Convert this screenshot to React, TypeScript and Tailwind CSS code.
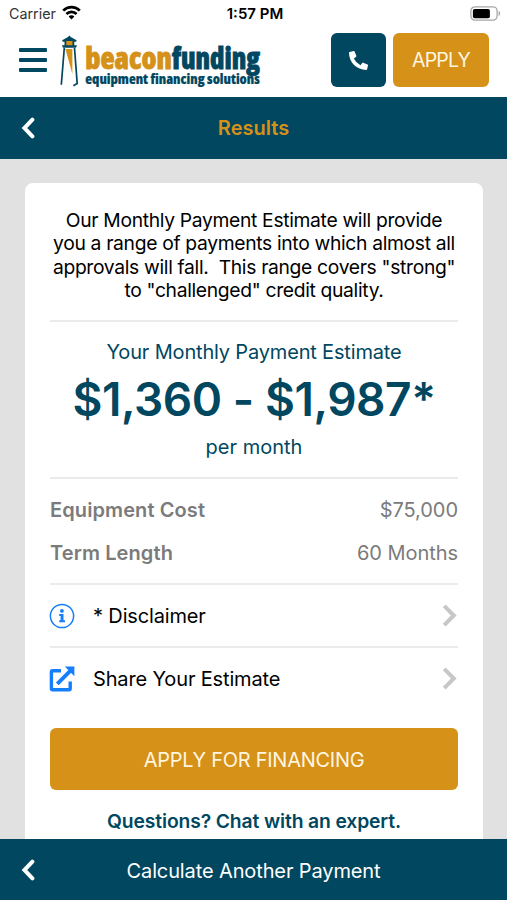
import type { ReactNode } from 'react'
import { FaPhoneAlt } from 'react-icons/fa'

function WifiIcon() {
  return (
    <svg className="ml-[6px] mt-[-2px] h-[15px] w-[19px]" viewBox="0 0 19 15" fill="none" stroke="#000" strokeWidth="2.7">
      <path d="M1.2 5.6C5.8 1 13.2 1 17.8 5.6" />
      <path d="M4.4 9C7.2 6.1 11.8 6.1 14.6 9" />
      <path d="M9.5 14.4 6.6 11.4C8.2 9.9 10.8 9.9 12.4 11.4Z" fill="#000" stroke="none" />
    </svg>
  )
}

function BatteryIcon() {
  return (
    <svg className="mt-[-1px] h-[15px] w-[31px]" viewBox="0 0 31 15">
      <rect x="0.9" y="0.9" width="26.2" height="13.2" rx="4" fill="none" stroke="#a6a6a6" strokeWidth="1.3" />
      <rect x="2.9" y="2.9" width="17" height="9.3" rx="1.8" fill="#000" />
      <path d="M28.6 5V10C30.6 9.4 30.6 5.6 28.6 5Z" fill="#a6a6a6" />
    </svg>
  )
}

function Logo() {
  return (
    <svg className="ml-[11px] h-[58px] w-[210px]" viewBox="58 33 210 58" role="img" aria-label="Beacon Funding">
      {/* Lighthouse */}
      <path d="M69.4 35.4 70.8 37 76.6 40.2 76.2 41.8H62.6L62.2 40.2 68 37Z" fill="#00475f" />
      <path d="M65 41H74V46H65Z" fill="#d59118" />
      <path d="M65.4 41V46M73.4 41V46" stroke="#00475f" strokeWidth="1.8" fill="none" />
      <path d="M61.8 45.2H77L76 47.8H63Z" fill="#00475f" />
      <path d="M65.4 49H72.4V74Z" fill="#d59118" />
      <path d="M64.3 48 61.3 84.8M74.5 48 77.2 83.6 73.4 85.8" stroke="#00475f" strokeWidth="1.7" fill="none" />
      <g className="font-['Open_Sans','Liberation_Sans',sans-serif] [font-stretch:75%]">
        <text x="85.3" y="68.6" fontSize="29.5" fontWeight="800" fill="#d59118" stroke="#d59118" strokeWidth="0.8" textLength="86.7" lengthAdjust="spacingAndGlyphs">
          beacon
        </text>
        <text x="172" y="68.6" fontSize="29.5" fontWeight="800" fill="#00475f" stroke="#00475f" strokeWidth="0.8" textLength="88" lengthAdjust="spacingAndGlyphs">
          funding
        </text>
        <text x="85.3" y="83.8" fontSize="14.2" fontWeight="800" fill="#00475f" stroke="#00475f" strokeWidth="0.2" textLength="174.5" lengthAdjust="spacingAndGlyphs">
          equipment financing solutions
        </text>
      </g>
    </svg>
  )
}

function InfoIcon() {
  return (
    <svg className="size-[26px]" viewBox="0 0 26 26">
      <circle cx="13" cy="13" r="11.6" fill="none" stroke="#147efb" strokeWidth="1.5" />
      <circle cx="12.9" cy="7.9" r="1.9" fill="#147efb" />
      <path d="M10.2 11H14.5V17.3H16V19.3H10.2V17.3H11.6V13H10.2Z" fill="#147efb" />
    </svg>
  )
}

function ShareIcon() {
  return (
    <svg className="size-[26px]" viewBox="0 0 26 26" fill="none" stroke="#147efb">
      <path d="M12 4.7H3.6A1.2 1.2 0 0 0 2.4 5.9V22.6A1.2 1.2 0 0 0 3.6 23.8H20A1.2 1.2 0 0 0 21.2 22.6V15.5" strokeWidth="3.4" />
      <path d="M8.3 17.8 22 4.1" strokeWidth="3.8" />
      <path d="M15.8 0.6H25.4V10.2Z" fill="#147efb" stroke="none" />
    </svg>
  )
}

function BackChevron() {
  return (
    <svg className="h-[22px] w-[18px]" viewBox="0 0 18 22" fill="none" stroke="#fff" strokeWidth="4">
      <path d="M13.4 2.6 5.4 11 13.4 19.4" strokeLinecap="round" />
    </svg>
  )
}

function RowChevron() {
  return (
    <svg className="mr-px h-[23px] w-[15px]" viewBox="0 0 15 23" fill="none" stroke="#c7c7c7" strokeWidth="4">
      <path d="M2.2 1.9 11.8 11.5 2.2 21.1" />
    </svg>
  )
}

function LinkRow({ icon, children }: { icon: ReactNode; children: ReactNode }) {
  return (
    <button className="flex h-[63px] w-full items-center border-t-2 border-[#ebebeb] text-left text-black">
      <span className="-ml-px w-[44px]">{icon}</span>
      <span className="flex-1 text-[20px] tracking-[-0.15px]">{children}</span>
      <RowChevron />
    </button>
  )
}

function DetailRow({ label, value }: { label: string; value: string }) {
  return (
    <div className="flex h-[43px] items-center justify-between text-[20px] text-[#7b7b7b]">
      <span className="font-semibold tracking-[0.1px]">{label}</span>
      <span className="tracking-[-0.05px]">{value}</span>
    </div>
  )
}

export default function App() {
  return (
    <div className="flex h-[900px] w-[507px] flex-col overflow-hidden bg-[#e1e1e1] font-['Inter','Liberation_Sans',sans-serif] text-black">
      {/* Status bar */}
      <div className="flex h-[27px] shrink-0 items-center bg-white pl-[9px] pr-[6px] text-[14.3px]">
        <div className="flex flex-1 items-center text-[#333]">
          <span>Carrier</span>
          <WifiIcon />
        </div>
        <span className="pt-[2px] text-[15px] font-semibold">1:57 PM</span>
        <div className="flex flex-1 justify-end">
          <BatteryIcon />
        </div>
      </div>

      {/* Header */}
      <header className="flex h-[70px] shrink-0 items-start bg-white pl-[19px] pt-[6px]">
        <button aria-label="Menu" className="mt-[15px] flex w-[28px] flex-col gap-[6px]">
          <span className="h-[4px] rounded-[1px] bg-[#00475f]" />
          <span className="h-[4px] rounded-[1px] bg-[#00475f]" />
          <span className="h-[4px] rounded-[1px] bg-[#00475f]" />
        </button>
        <Logo />
        <button aria-label="Call" className="ml-[63px] flex h-[54px] w-[55px] items-center justify-center rounded-[6px] bg-[#00475f]">
          <FaPhoneAlt className="size-[19px] text-white" />
        </button>
        <button className="ml-[7px] h-[54px] w-[96px] rounded-[6px] bg-[#d59118] pt-px text-[19.5px] tracking-[-0.8px] text-[#fff6e0]">
          APPLY
        </button>
      </header>

      {/* Title bar */}
      <div className="flex h-[62px] shrink-0 items-center bg-[#00475f] px-[19px]">
        <BackChevron />
        <h1 className="flex-1 pr-[18px] text-center text-[20px] font-semibold text-[#d59118]">Results</h1>
      </div>

      {/* Result card */}
      <main className="ml-[25px] mr-[24px] mt-[24px] min-h-0 flex-1 overflow-hidden rounded-t-[8px] bg-white px-[25px]">
        <p className="h-[137px] whitespace-pre pt-[26px] text-center text-[19.3px] leading-[23.3px] tracking-[-0.33px]">
          {'Our Monthly Payment Estimate will provide\nyou a range of payments into which almost all\napprovals will fall.  This range covers "strong"\nto "challenged" credit quality.'}
        </p>
        <section className="h-[157px] border-t-2 border-[#ebebeb] pt-[17px] text-center text-[20px] leading-[26px] text-[#00475f]">
          <p className="tracking-[-0.17px]">Your Monthly Payment Estimate</p>
          <p className="mt-[4px] whitespace-nowrap text-[46px] font-semibold leading-[60px] tracking-[-0.45px]">$1,360 - $1,987*</p>
          <p className="mt-[5px]">per month</p>
        </section>
        <section className="h-[106px] border-t-2 border-[#ebebeb] pt-[9px]">
          <DetailRow label="Equipment Cost" value="$75,000" />
          <DetailRow label="Term Length" value="60 Months" />
        </section>
        <LinkRow icon={<InfoIcon />}>* Disclaimer</LinkRow>
        <LinkRow icon={<ShareIcon />}>Share Your Estimate</LinkRow>
        <button className="mt-[19px] h-[62px] w-full rounded-[6px] bg-[#d59118] pt-[2px] text-[20px] tracking-[-0.27px] text-[#fff6e0]">
          APPLY FOR FINANCING
        </button>
        <p className="mt-[18px] text-center text-[19.3px] font-semibold leading-[26px] tracking-[-0.12px] text-[#00475f]">
          Questions? Chat with an expert.
        </p>
      </main>

      {/* Bottom bar */}
      <footer className="flex h-[61px] shrink-0 items-center bg-[#00475f] px-[19px] text-white">
        <BackChevron />
        <span className="flex-1 pr-[18px] pt-[2px] text-center text-[20px] tracking-[-0.12px]">Calculate Another Payment</span>
      </footer>
    </div>
  )
}
